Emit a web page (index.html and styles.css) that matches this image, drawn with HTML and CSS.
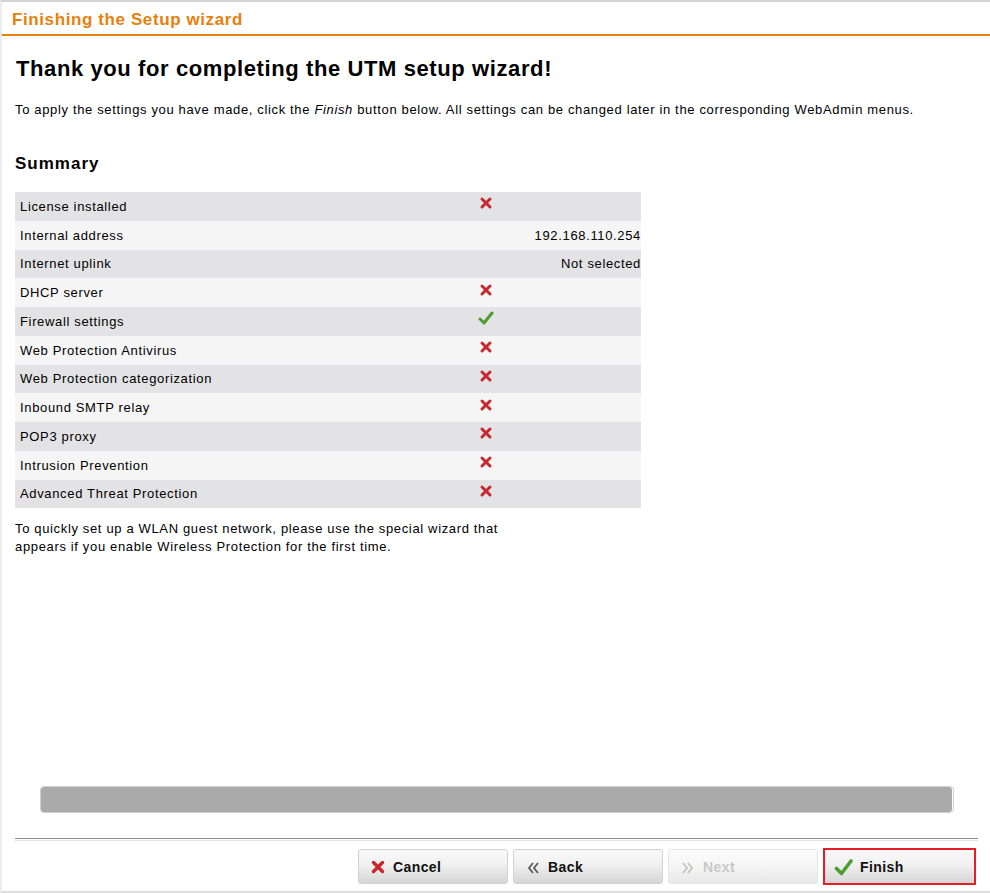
FILE: index.html
```html
<!DOCTYPE html>
<html>
<head>
<meta charset="utf-8">
<link rel="stylesheet" href="styles.css">
</head>
<body>
<div class="frame">
  <div class="header">Finishing the Setup wizard</div>
  <div class="content">
    <h1 class="title">Thank you for completing the UTM setup wizard!</h1>
    <p class="intro">To apply the settings you have made, click the <em>Finish</em> button below. All settings can be changed later in the corresponding WebAdmin menus.</p>
    <h2 class="summary-title">Summary</h2>
    <div class="summary">
      <div class="row"><span class="label">License installed</span><span class="icon"><svg width="14" height="14" viewBox="0 0 14 14"><path d="M3 3L11 11M11 3L3 11" stroke="#c8282d" stroke-width="3" stroke-linecap="round"/></svg></span><span class="value"></span></div>
      <div class="row"><span class="label">Internal address</span><span class="icon"></span><span class="value">192.168.110.254</span></div>
      <div class="row"><span class="label">Internet uplink</span><span class="icon"></span><span class="value">Not selected</span></div>
      <div class="row"><span class="label">DHCP server</span><span class="icon"><svg width="14" height="14" viewBox="0 0 14 14"><path d="M3 3L11 11M11 3L3 11" stroke="#c8282d" stroke-width="3" stroke-linecap="round"/></svg></span><span class="value"></span></div>
      <div class="row"><span class="label">Firewall settings</span><span class="icon"><svg width="16" height="14" viewBox="0 0 16 14"><path d="M2 8L6 12L14 2" stroke="#4d9e2f" stroke-width="3" fill="none" stroke-linecap="round" stroke-linejoin="round"/></svg></span><span class="value"></span></div>
      <div class="row"><span class="label">Web Protection Antivirus</span><span class="icon"><svg width="14" height="14" viewBox="0 0 14 14"><path d="M3 3L11 11M11 3L3 11" stroke="#c8282d" stroke-width="3" stroke-linecap="round"/></svg></span><span class="value"></span></div>
      <div class="row"><span class="label">Web Protection categorization</span><span class="icon"><svg width="14" height="14" viewBox="0 0 14 14"><path d="M3 3L11 11M11 3L3 11" stroke="#c8282d" stroke-width="3" stroke-linecap="round"/></svg></span><span class="value"></span></div>
      <div class="row"><span class="label">Inbound SMTP relay</span><span class="icon"><svg width="14" height="14" viewBox="0 0 14 14"><path d="M3 3L11 11M11 3L3 11" stroke="#c8282d" stroke-width="3" stroke-linecap="round"/></svg></span><span class="value"></span></div>
      <div class="row"><span class="label">POP3 proxy</span><span class="icon"><svg width="14" height="14" viewBox="0 0 14 14"><path d="M3 3L11 11M11 3L3 11" stroke="#c8282d" stroke-width="3" stroke-linecap="round"/></svg></span><span class="value"></span></div>
      <div class="row"><span class="label">Intrusion Prevention</span><span class="icon"><svg width="14" height="14" viewBox="0 0 14 14"><path d="M3 3L11 11M11 3L3 11" stroke="#c8282d" stroke-width="3" stroke-linecap="round"/></svg></span><span class="value"></span></div>
      <div class="row"><span class="label">Advanced Threat Protection</span><span class="icon"><svg width="14" height="14" viewBox="0 0 14 14"><path d="M3 3L11 11M11 3L3 11" stroke="#c8282d" stroke-width="3" stroke-linecap="round"/></svg></span><span class="value"></span></div>
    </div>
    <p class="note">To quickly set up a WLAN guest network, please use the special wizard that appears if you enable Wireless Protection for the first time.</p>
  </div>
  <div class="progress"><div class="progress-fill"></div></div>
  <div class="rule"></div>
  <div class="buttons">
    <button class="btn"><svg width="16" height="16" viewBox="0 0 16 16"><path d="M3.5 3.5L12.5 12.5M12.5 3.5L3.5 12.5" stroke="#c8282d" stroke-width="3.4" stroke-linecap="round"/></svg><span>Cancel</span></button>
    <button class="btn"><svg width="16" height="16" viewBox="0 0 16 16"><path d="M8 4L4 9L8 14M13 4L9 9L13 14" stroke="#5a5a5a" stroke-width="1.8" fill="none"/></svg><span>Back</span></button>
    <button class="btn disabled"><svg width="16" height="16" viewBox="0 0 16 16"><path d="M3 4L7 9L3 14M8 4L12 9L8 14" stroke="#c4c4c4" stroke-width="1.8" fill="none"/></svg><span>Next</span></button>
    <button class="btn active"><svg width="20" height="18" viewBox="0 0 20 18"><path d="M2.5 10.5L7.5 15.5L17 3" stroke="#4d9e2f" stroke-width="3.6" fill="none" stroke-linecap="round" stroke-linejoin="round"/></svg><span>Finish</span></button>
  </div>
</div>
</body>
</html>
```
FILE: styles.css
```css
html, body {
  margin: 0;
  padding: 0;
  background: #ffffff;
}
body {
  font-family: "Liberation Sans", Arial, sans-serif;
  font-size: 13px;
  letter-spacing: 0.65px;
  color: #000;
}
.frame {
  box-sizing: border-box;
  width: 990px;
  height: 893px;
  border-top: 2px solid #d4d4d4;
  border-left: 2px solid #ececec;
  border-bottom: 2px solid #dedede;
  display: flex;
  flex-direction: column;
}
.header {
  box-sizing: border-box;
  height: 34px;
  padding: 8px 10px 0;
  line-height: 20px;
  font-size: 17px;
  letter-spacing: 0.6px;
  font-weight: bold;
  color: #e8800c;
  border-bottom: 2px solid #e8800c;
}
.content {
  flex: 1;
  padding: 0 0 0 13px;
}
.title {
  margin: 20px 0 0 1px;
  font-size: 22px;
  letter-spacing: 0.6px;
  line-height: 26px;
  font-weight: bold;
}
.intro {
  margin: 20px 0 0;
  line-height: 16px;
}
.intro em {
  font-style: italic;
}
.summary-title {
  margin: 36px 0 0;
  font-size: 17px;
  letter-spacing: 1px;
  line-height: 20px;
  font-weight: bold;
}
.summary {
  margin-top: 18px;
  width: 626px;
}
.row {
  display: grid;
  grid-template-columns: 463px 16px 1fr;
  align-items: center;
  height: 28.75px;
  background: #f5f5f5;
}
.row:nth-child(odd) {
  background: #e3e3e5;
}
.label {
  padding-left: 5px;
}
.icon {
  display: flex;
  justify-content: center;
  align-items: center;
  position: relative;
  top: -3px;
}
.icon svg {
  display: block;
}
.value {
  text-align: right;
  padding-right: 0;
}
.note {
  margin: 12px 0 0;
  width: 510px;
  line-height: 18px;
}
.progress {
  box-sizing: border-box;
  margin: 0 0 0 38px;
  width: 914px;
  height: 27px;
  border: 1px solid #cfcfcf;
  border-radius: 4px;
  background: #fff;
  padding: 0 1px 0 0;
}
.progress-fill {
  height: 100%;
  background: #aaaaaa;
  border-radius: 3px;
}
.rule {
  margin: 25px 12px 0 13px;
  height: 1px;
  border-top: 1px solid #8c8c8c;
  border-bottom: 1px solid #e2e2e2;
}
.buttons {
  display: flex;
  justify-content: flex-end;
  gap: 5px;
  margin: 8px 14px 6px 0;
}
.btn {
  box-sizing: border-box;
  width: 150px;
  height: 35px;
  display: flex;
  align-items: center;
  gap: 7px;
  padding: 0 0 0 11px;
  border: 1px solid #d2d2d2;
  border-radius: 3px;
  background: linear-gradient(#fafafa, #f0f0f0 45%, #d6d6d6);
  font-family: "Liberation Sans", Arial, sans-serif;
  font-size: 14px;
  letter-spacing: 0.4px;
  font-weight: bold;
  color: #111;
}
.btn svg {
  display: block;
}
.btn.disabled {
  color: #c8c8c8;
  border-color: #e6e6e6;
  background: linear-gradient(#fcfcfc, #f6f6f6 45%, #e8e8e8);
}
.btn.active {
  width: 153px;
  height: 37px;
  margin-top: -1px;
  border: 2px solid #e81c24;
  border-radius: 0;
  padding-left: 9px;
  gap: 6px;
}
```
